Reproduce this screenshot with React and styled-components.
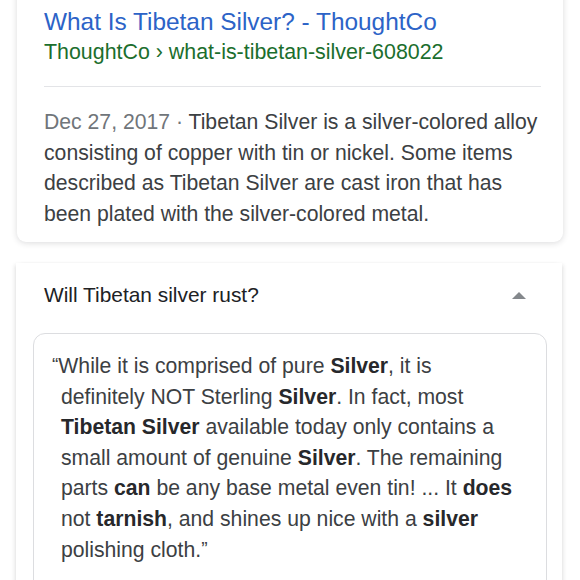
import React from 'react'
import styled, { createGlobalStyle } from 'styled-components'

const GlobalStyle = createGlobalStyle`
  html, body {
    margin: 0;
    padding: 0;
    background: #fff;
    font-family: "Liberation Sans", Arial, Helvetica, sans-serif;
    overflow: hidden;
  }
`

const Page = styled.div`
  width: 580px;
  height: 580px;
  overflow: hidden;
  display: flex;
  flex-direction: column;
  gap: 21px;
`

const ResultCard = styled.div`
  margin: -20px 17px 0;
  padding: 27px 22px 13px 27px;
  background: #fff;
  border-radius: 0 0 9px 9px;
  box-shadow: 0 1px 6px rgba(32, 33, 36, 0.16);
`

const Title = styled.a`
  display: block;
  font-size: 24.4px;
  line-height: 30px;
  color: #2c63c7;
  text-decoration: none;
`

const Breadcrumb = styled.div`
  font-size: 21.4px;
  line-height: 30px;
  color: #1b6e2d;
`

const Divider = styled.hr`
  border: 0;
  border-top: 1px solid #e3e4e7;
  margin: 19px 0 20px;
`

const Snippet = styled.p`
  margin: 0;
  font-size: 21.2px;
  line-height: 30.5px;
  color: #3c4043;
`

const Date = styled.span`
  color: #70757a;
`

const QuestionCard = styled.div`
  margin: 0 18px 0 16px;
  padding: 17px 0 0;
  background: #fff;
  flex: 1;
  box-shadow: -3px 0 4px -2px rgba(32, 33, 36, 0.14), 3px 0 4px -2px rgba(32, 33, 36, 0.14);
`

const QuestionRow = styled.div`
  display: flex;
  align-items: center;
  justify-content: space-between;
  padding: 0 36px 0 28px;
  font-size: 20.9px;
  line-height: 30px;
  color: #202124;
`

const Caret = styled.span`
  width: 0;
  height: 0;
  border-left: 7px solid transparent;
  border-right: 7px solid transparent;
  border-bottom: 7px solid #84888c;
`

const QuoteBox = styled.div`
  margin: 23px 15px 0 17px;
  padding: 16px 31px 80px 27px;
  border: 1px solid #dcdde0;
  border-radius: 12px;
  font-size: 21.2px;
  line-height: 30.5px;
  color: #3c4043;
`

const QuoteMark = styled.span`
  margin-left: ${p => (p.$open ? '-9px' : '0')};
  vertical-align: 2px;
  font-size: 0.9em;
  color: #3c4043;
`

const Strong = styled.b`
  color: #27282b;
`

export default function App() {
  return (
    <Page>
      <GlobalStyle />
      <ResultCard>
        <Title href="#">What Is Tibetan Silver? - ThoughtCo</Title>
        <Breadcrumb>ThoughtCo › what-is-tibetan-silver-608022</Breadcrumb>
        <Divider />
        <Snippet>
          <Date>Dec 27, 2017 · </Date>Tibetan Silver is a silver-colored alloy consisting of copper with
          tin or nickel. Some items described as Tibetan Silver are cast iron that has been plated with
          the silver-colored metal.
        </Snippet>
      </ResultCard>
      <QuestionCard>
        <QuestionRow>
          <span>Will Tibetan silver rust?</span>
          <Caret />
        </QuestionRow>
        <QuoteBox>
          <QuoteMark $open>“</QuoteMark>While it is comprised of pure <Strong>Silver</Strong>, it is
          definitely NOT Sterling <Strong>Silver</Strong>. In fact, most <Strong>Tibetan Silver</Strong>{' '}
          available today only contains a small amount of genuine <Strong>Silver</Strong>. The remaining
          parts <Strong>can</Strong> be any base metal even tin! ... It <Strong>does</Strong> not{' '}
          <Strong>tarnish</Strong>, and shines up nice with a <Strong>silver</Strong> polishing cloth.
          <QuoteMark>”</QuoteMark>
        </QuoteBox>
      </QuestionCard>
    </Page>
  )
}
